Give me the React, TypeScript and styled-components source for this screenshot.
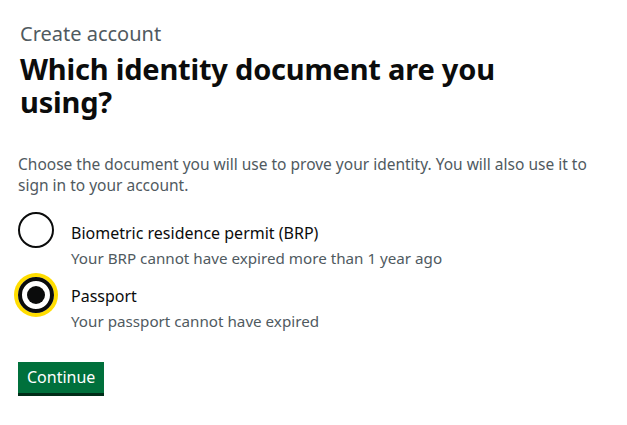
import React, { useState } from 'react';
import styled, { createGlobalStyle } from 'styled-components';

const GlobalStyle = createGlobalStyle`
  body {
    margin: 0;
    background: #ffffff;
    font-family: "Noto Sans", "Open Sans", Arial, sans-serif;
    color: #0b0c0c;
  }
`;

const Page = styled.main`
  padding: 22px 18px 20px 18px;
`;

const Caption = styled.span`
  display: block;
  font-size: 20px;
  line-height: 24px;
  color: #505a5f;
  padding-left: 2px;
`;

const Heading = styled.h1`
  margin: 6px 0 0 0;
  padding-left: 2px;
  font-size: 29px;
  line-height: 33px;
  font-weight: 700;
  letter-spacing: -0.2px;
  max-width: 520px;
`;

const Hint = styled.p`
  margin: 36px 0 0 0;
  font-size: 15.5px;
  line-height: 21px;
  color: #505a5f;
`;

const Options = styled.div`
  display: flex;
  flex-direction: column;
  gap: 6px;
  margin-top: 16px;
`;

const Option = styled.label`
  display: flex;
  align-items: flex-start;
  gap: 17px;
  cursor: pointer;
`;

const Circle = styled.span<{ $checked: boolean; $focus: boolean }>`
  flex: none;
  width: 36px;
  height: 36px;
  box-sizing: border-box;
  border-radius: 50%;
  border: ${p => (p.$focus ? '4px' : '2px')} solid #0b0c0c;
  box-shadow: ${p => (p.$focus ? '0 0 0 4px #ffdd00' : 'none')};
  display: flex;
  align-items: center;
  justify-content: center;
  margin-top: ${p => (p.$focus ? '3px' : '0')};

  &::after {
    content: '';
    display: ${p => (p.$checked ? 'block' : 'none')};
    width: 18px;
    height: 18px;
    border-radius: 50%;
    background: #0b0c0c;
  }
`;

const Text = styled.span<{ $focus: boolean }>`
  display: flex;
  flex-direction: column;
  padding-top: ${p => (p.$focus ? '12px' : '11px')};
`;

const Label = styled.span`
  font-size: 16px;
  line-height: 20px;
  color: #0b0c0c;
`;

const ItemHint = styled.span`
  margin-top: 5px;
  font-size: 15.2px;
  line-height: 20px;
  color: #505a5f;
`;

const Button = styled.button`
  margin-top: 31px;
  background: #00703c;
  color: #ffffff;
  border: 0;
  border-radius: 0;
  box-shadow: 0 3px 0 #002d18;
  font-family: inherit;
  font-size: 16px;
  line-height: 20px;
  padding: 5px 9px 6px 9px;
  cursor: pointer;
`;

const options = [
  { id: 'brp', label: 'Biometric residence permit (BRP)', hint: 'Your BRP cannot have expired more than 1 year ago' },
  { id: 'passport', label: 'Passport', hint: 'Your passport cannot have expired' },
];

export default function App() {
  const [selected, setSelected] = useState('passport');

  return (
    <>
      <GlobalStyle />
      <Page>
        <Caption>Create account</Caption>
        <Heading>Which identity document are you using?</Heading>
        <Hint>
          Choose the document you will use to prove your identity. You will also use it to sign in to your account.
        </Hint>
        <Options>
          {options.map(o => (
            <Option key={o.id} onClick={() => setSelected(o.id)}>
              <Circle $checked={selected === o.id} $focus={selected === o.id} />
              <Text $focus={selected === o.id}>
                <Label>{o.label}</Label>
                <ItemHint>{o.hint}</ItemHint>
              </Text>
            </Option>
          ))}
        </Options>
        <Button>Continue</Button>
      </Page>
    </>
  );
}
